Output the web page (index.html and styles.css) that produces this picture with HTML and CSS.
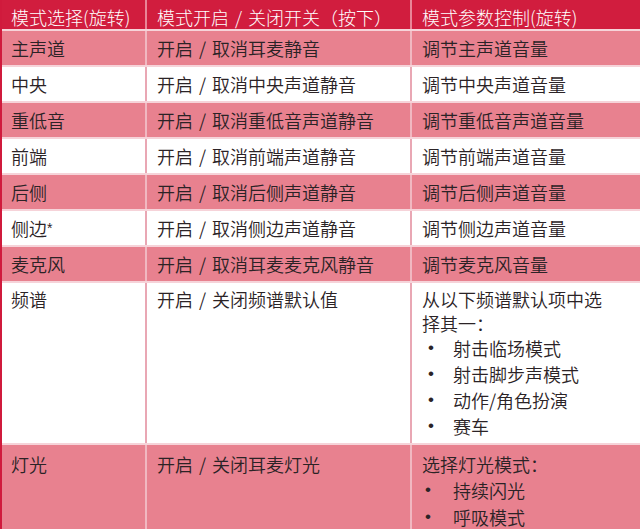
FILE: index.html
```html
<!DOCTYPE html>
<html lang="zh-CN">
<head>
<meta charset="utf-8">
<title>模式表</title>
<link rel="stylesheet" href="styles.css">
</head>
<body>
<div class="table">
  <div class="row head">
    <div class="cell c1">模式选择(旋转)</div>
    <div class="cell">模式开启 / 关闭开关（按下）</div>
    <div class="cell">模式参数控制(旋转)</div>
  </div>
  <div class="row pink">
    <div class="cell c1">主声道</div>
    <div class="cell">开启 / 取消耳麦静音</div>
    <div class="cell">调节主声道音量</div>
  </div>
  <div class="row white">
    <div class="cell c1">中央</div>
    <div class="cell">开启 / 取消中央声道静音</div>
    <div class="cell">调节中央声道音量</div>
  </div>
  <div class="row pink">
    <div class="cell c1">重低音</div>
    <div class="cell">开启 / 取消重低音声道静音</div>
    <div class="cell">调节重低音声道音量</div>
  </div>
  <div class="row white">
    <div class="cell c1">前端</div>
    <div class="cell">开启 / 取消前端声道静音</div>
    <div class="cell">调节前端声道音量</div>
  </div>
  <div class="row pink">
    <div class="cell c1">后侧</div>
    <div class="cell">开启 / 取消后侧声道静音</div>
    <div class="cell">调节后侧声道音量</div>
  </div>
  <div class="row white">
    <div class="cell c1">侧边<span class="ast">*</span></div>
    <div class="cell">开启 / 取消侧边声道静音</div>
    <div class="cell">调节侧边声道音量</div>
  </div>
  <div class="row pink">
    <div class="cell c1">麦克风</div>
    <div class="cell">开启 / 取消耳麦麦克风静音</div>
    <div class="cell">调节麦克风音量</div>
  </div>
  <div class="row white eq">
    <div class="cell c1">频谱</div>
    <div class="cell">开启 / 关闭频谱默认值</div>
    <div class="cell">
      <p class="para">从以下频谱默认项中选<br>择其一：</p>
      <ul class="list">
        <li>射击临场模式</li>
        <li>射击脚步声模式</li>
        <li>动作/角色扮演</li>
        <li>赛车</li>
      </ul>
    </div>
  </div>
  <div class="row pink light">
    <div class="cell c1">灯光</div>
    <div class="cell">开启 / 关闭耳麦灯光</div>
    <div class="cell">
      <p class="para2">选择灯光模式：</p>
      <ul class="list list2">
        <li>持续闪光</li>
        <li>呼吸模式</li>
      </ul>
    </div>
  </div>
</div>
</body>
</html>
```

FILE: styles.css
```css
html, body {
  margin: 0;
  padding: 0;
}
body {
  width: 640px;
  height: 529px;
  overflow: hidden;
  background: #f6d3d9;
  font-family: "Noto Sans CJK SC", "Noto Sans", sans-serif;
  font-weight: 350;
  font-size: 18px;
  color: #2b2326;
}
.table {
  display: flex;
  flex-direction: column;
  gap: 2px;
  border-left: 2px solid #d01a3c;
  background: #f6d3d9;
  height: 529px;
  box-sizing: border-box;
}
.row {
  display: grid;
  grid-template-columns: 143px 263px 1fr;
  column-gap: 2px;
  flex: none;
}
.cell {
  padding: 4px 10px;
  line-height: 26px;
  white-space: nowrap;
  word-spacing: 2px;
}
.cell.c1 {
  padding-left: 9px;
}
.head {
  background: #e98597;
  height: 29px;
}
.head .cell {
  background: #d11d3e;
  color: #ffffff;
  padding-top: 5px;
  padding-bottom: 0;
  line-height: 24px;
  font-weight: 300;
}
.pink {
  background: #f1b8c1;
}
.pink .cell {
  background: #e8818f;
}
.white {
  background: #e9a7b4;
}
.white .cell {
  background: #ffffff;
}
.ast {
  font-family: "Liberation Sans", sans-serif;
  font-size: 14px;
  vertical-align: 3px;
}
.eq .cell {
  line-height: 24px;
}
.para {
  margin: 0;
  line-height: 24px;
}
.list {
  list-style: none;
  margin: 0;
  padding: 0;
}
.list li {
  display: flex;
  line-height: 26px;
  word-spacing: 0;
}
.list li::before {
  content: "•";
  flex: none;
  width: 31px;
  padding-left: 6px;
  box-sizing: border-box;
  font-family: "Liberation Sans", sans-serif;
  font-size: 17px;
}
.light {
  flex: 1 1 auto;
  min-height: 0;
}
.light .cell {
  padding-top: 6px;
  padding-bottom: 0;
}
.para2 {
  margin: 0;
  line-height: 26px;
}
.list2 li {
  line-height: 26.5px;
}
.list2 li::before {
  padding-left: 3px;
}
```
